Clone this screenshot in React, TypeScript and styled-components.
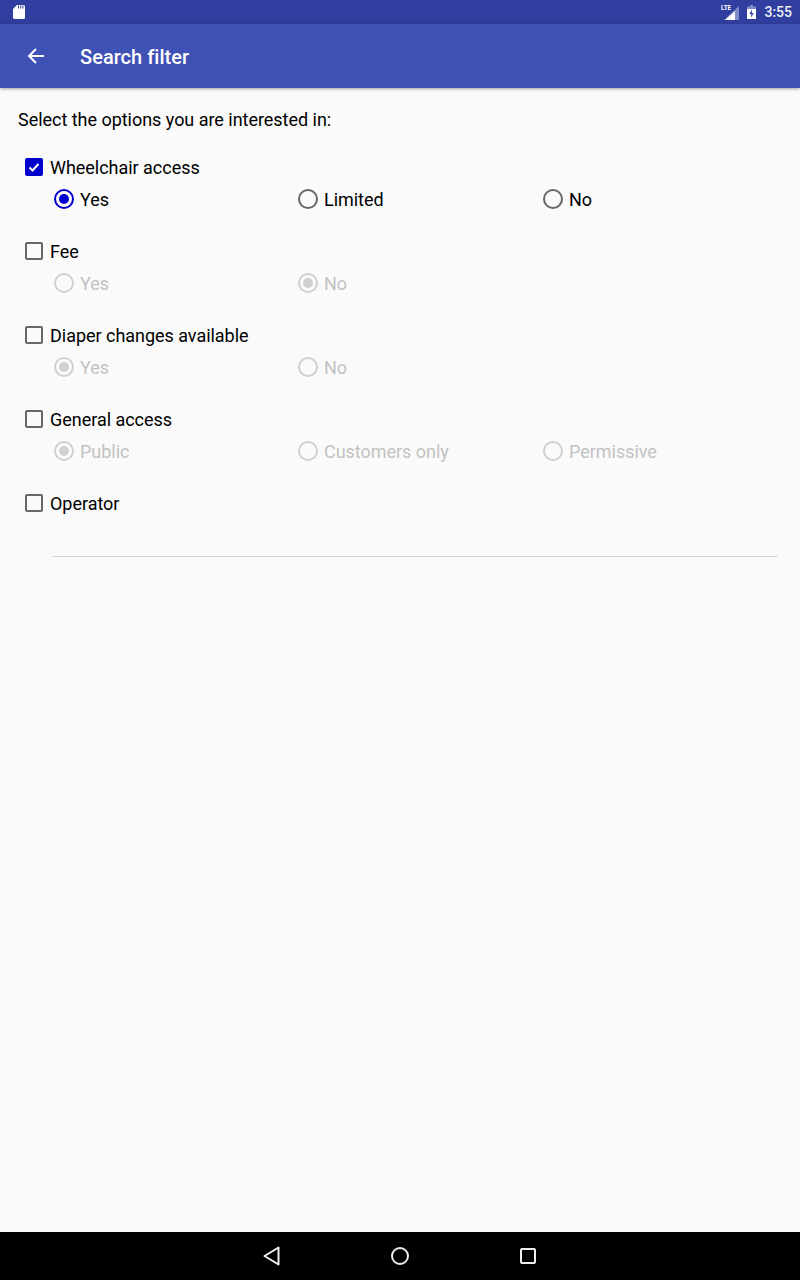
import React from 'react';
import styled, { createGlobalStyle } from 'styled-components';

const GlobalStyle = createGlobalStyle`
  html, body {
    margin: 0;
    padding: 0;
    background: #fafafa;
  }
  * {
    box-sizing: border-box;
  }
`;

const Screen = styled.div`
  width: 800px;
  height: 1280px;
  display: flex;
  flex-direction: column;
  font-family: Roboto, "Liberation Sans", sans-serif;
  background: #fafafa;
  overflow: hidden;
`;

const StatusBar = styled.div`
  height: 24px;
  flex: none;
  background: #303f9f;
  display: flex;
  align-items: center;
  padding: 0 8px 0 13px;
  color: #fff;
`;

const SdIcon = styled.svg`
  margin-bottom: 1px;
`;

const StatusRight = styled.div`
  margin-left: auto;
  display: flex;
  align-items: center;
`;

const Clock = styled.span`
  font-size: 14px;
  font-weight: 500;
  line-height: 24px;
  margin-left: 8px;
  color: #eef0f8;
`;

const AppBar = styled.header`
  height: 64px;
  flex: none;
  background: #3f51b5;
  display: flex;
  align-items: center;
  padding-left: 26px;
  color: #fff;
  box-shadow: 0 1px 3px rgba(0, 0, 0, 0.35);
  position: relative;
`;

const Title = styled.h1`
  margin: 2px 0 0 34px;
  font-size: 20px;
  font-weight: 500;
  line-height: 64px;
  letter-spacing: 0.03px;
`;

const Content = styled.main`
  flex: 1;
  padding: 20px 22px 0 18px;
`;

const Intro = styled.p`
  margin: 0;
  font-size: 18px;
  line-height: 24px;
  letter-spacing: -0.03px;
  color: #000;
`;

const FilterList = styled.div`
  display: flex;
  flex-direction: column;
  gap: 20px;
  margin-top: 20px;
`;

const Filter = styled.section``;

const CheckRow = styled.div`
  display: flex;
  align-items: center;
  height: 32px;
  padding-left: 7px;
`;

const CheckBox = styled.span<{ $on?: boolean }>`
  width: 18px;
  height: 18px;
  margin-bottom: 2px;
  border-radius: 2px;
  border: ${(p) => (p.$on ? 'none' : '2px solid #666')};
  background: ${(p) => (p.$on ? '#0000cc' : 'transparent')};
  display: flex;
  align-items: center;
  justify-content: center;
`;

const CheckLabel = styled.span`
  margin-left: 7px;
  font-size: 18px;
  line-height: 24px;
  letter-spacing: -0.03px;
  color: #000;
`;

const RadioRow = styled.div`
  display: grid;
  grid-template-columns: 244px 245px 1fr;
  height: 32px;
  padding-left: 36px;
  align-items: center;
`;

const RadioItem = styled.div`
  display: flex;
  align-items: center;
`;

const RadioCircle = styled.span<{ $on?: boolean; $off?: boolean }>`
  width: 20px;
  height: 20px;
  margin-bottom: 2px;
  border-radius: 50%;
  border: 2px solid
    ${(p) => (p.$off ? '#d0d0d0' : p.$on ? '#0000cc' : '#666')};
  display: flex;
  align-items: center;
  justify-content: center;
  &::after {
    content: '';
    display: ${(p) => (p.$on ? 'block' : 'none')};
    width: 10px;
    height: 10px;
    border-radius: 50%;
    background: ${(p) => (p.$off ? '#d0d0d0' : '#0000cc')};
  }
`;

const RadioLabel = styled.span<{ $off?: boolean }>`
  margin-left: 6px;
  font-size: 18px;
  line-height: 24px;
  letter-spacing: -0.03px;
  color: ${(p) => (p.$off ? '#c2c2c2' : '#000')};
`;

const OperatorInput = styled.div`
  margin: 36px 0 0 34px;
  height: 1px;
  background: #d6d6d6;
`;

const NavBar = styled.nav`
  height: 48px;
  flex: none;
  background: #000;
  display: grid;
  grid-template-columns: repeat(3, 128px);
  justify-content: center;
  align-items: center;
  justify-items: center;
`;

const BatteryIcon = styled.svg`
  margin-left: 8px;
`;

type Option = { label: string; on?: boolean };
type FilterDef = { label: string; on?: boolean; options?: Option[] };

const filters: FilterDef[] = [
  {
    label: 'Wheelchair access',
    on: true,
    options: [{ label: 'Yes', on: true }, { label: 'Limited' }, { label: 'No' }],
  },
  { label: 'Fee', options: [{ label: 'Yes' }, { label: 'No', on: true }] },
  {
    label: 'Diaper changes available',
    options: [{ label: 'Yes', on: true }, { label: 'No' }],
  },
  {
    label: 'General access',
    options: [{ label: 'Public', on: true }, { label: 'Customers only' }, { label: 'Permissive' }],
  },
  { label: 'Operator' },
];

const App: React.FC = () => {
  return (
    <Screen>
      <GlobalStyle />
      <StatusBar>
        <SdIcon width="12" height="14" viewBox="0 0 12 14">
          <path d="M4 0h6.500A1.500 1.500 0 0 1 12 1.500v11a1.500 1.500 0 0 1-1.500 1.500h-9A1.500 1.500 0 0 1 0 12.500V4z" fill="#fff" />
          <path d="M5.500 .5v3M7.700 .5v3M9.900 .5v3" stroke="#303f9f" strokeWidth="1" />
        </SdIcon>
        <StatusRight>
          <svg width="18" height="18" viewBox="0 0 18 18">
            <path d="M18 3v14H3z" fill="#7f8cc9" />
            <path d="M14 8v9H4z" fill="#fff" />
            <text x="0" y="7" fontSize="7" fontWeight="700" fill="#fff" fontFamily="Roboto, sans-serif" textLength="10" lengthAdjust="spacingAndGlyphs">LTE</text>
          </svg>
          <BatteryIcon width="9" height="14" viewBox="0 0 9 14">
            <path d="M3 0h3v1.500h3V14H0V1.500h3z" fill="#7f8cc9" />
            <path d="M0 4h9v10H0z" fill="#fff" />
            <path d="M5 4.500 2.400 9h1.800v3.500L6.700 8H4.800z" fill="#303f9f" />
          </BatteryIcon>
          <Clock>3:55</Clock>
        </StatusRight>
      </StatusBar>

      <AppBar>
        <svg width="20" height="20" viewBox="0 0 20 20" fill="none" stroke="#fff" strokeWidth="2">
          <path d="M18 10H3.500M10 3 3 10l7 7" />
        </svg>
        <Title>Search filter</Title>
      </AppBar>

      <Content>
        <Intro>Select the options you are interested in:</Intro>
        <FilterList>
          {filters.map((f) => (
            <Filter key={f.label}>
              <CheckRow>
                <CheckBox $on={f.on}>
                  {f.on && (
                    <svg width="14" height="14" viewBox="0 0 14 14" fill="none" stroke="#fff" strokeWidth="2">
                      <path d="M2.500 7.500 5.500 10.500 11.500 4" />
                    </svg>
                  )}
                </CheckBox>
                <CheckLabel>{f.label}</CheckLabel>
              </CheckRow>
              {f.options && (
                <RadioRow>
                  {f.options.map((o) => (
                    <RadioItem key={o.label}>
                      <RadioCircle $on={o.on} $off={!f.on} />
                      <RadioLabel $off={!f.on}>{o.label}</RadioLabel>
                    </RadioItem>
                  ))}
                </RadioRow>
              )}
            </Filter>
          ))}
        </FilterList>
        <OperatorInput />
      </Content>

      <NavBar>
        <svg width="18" height="20" viewBox="0 0 18 20" fill="none" stroke="#eee" strokeWidth="2" strokeLinejoin="round">
          <path d="M15.500 1.500v17L1.500 10z" />
        </svg>
        <svg width="20" height="20" viewBox="0 0 20 20" fill="none" stroke="#eee" strokeWidth="2">
          <circle cx="10" cy="10" r="8" />
        </svg>
        <svg width="18" height="18" viewBox="0 0 18 18" fill="none" stroke="#eee" strokeWidth="2">
          <rect x="2" y="2" width="14" height="14" rx="1" />
        </svg>
      </NavBar>
    </Screen>
  );
};

export default App;
